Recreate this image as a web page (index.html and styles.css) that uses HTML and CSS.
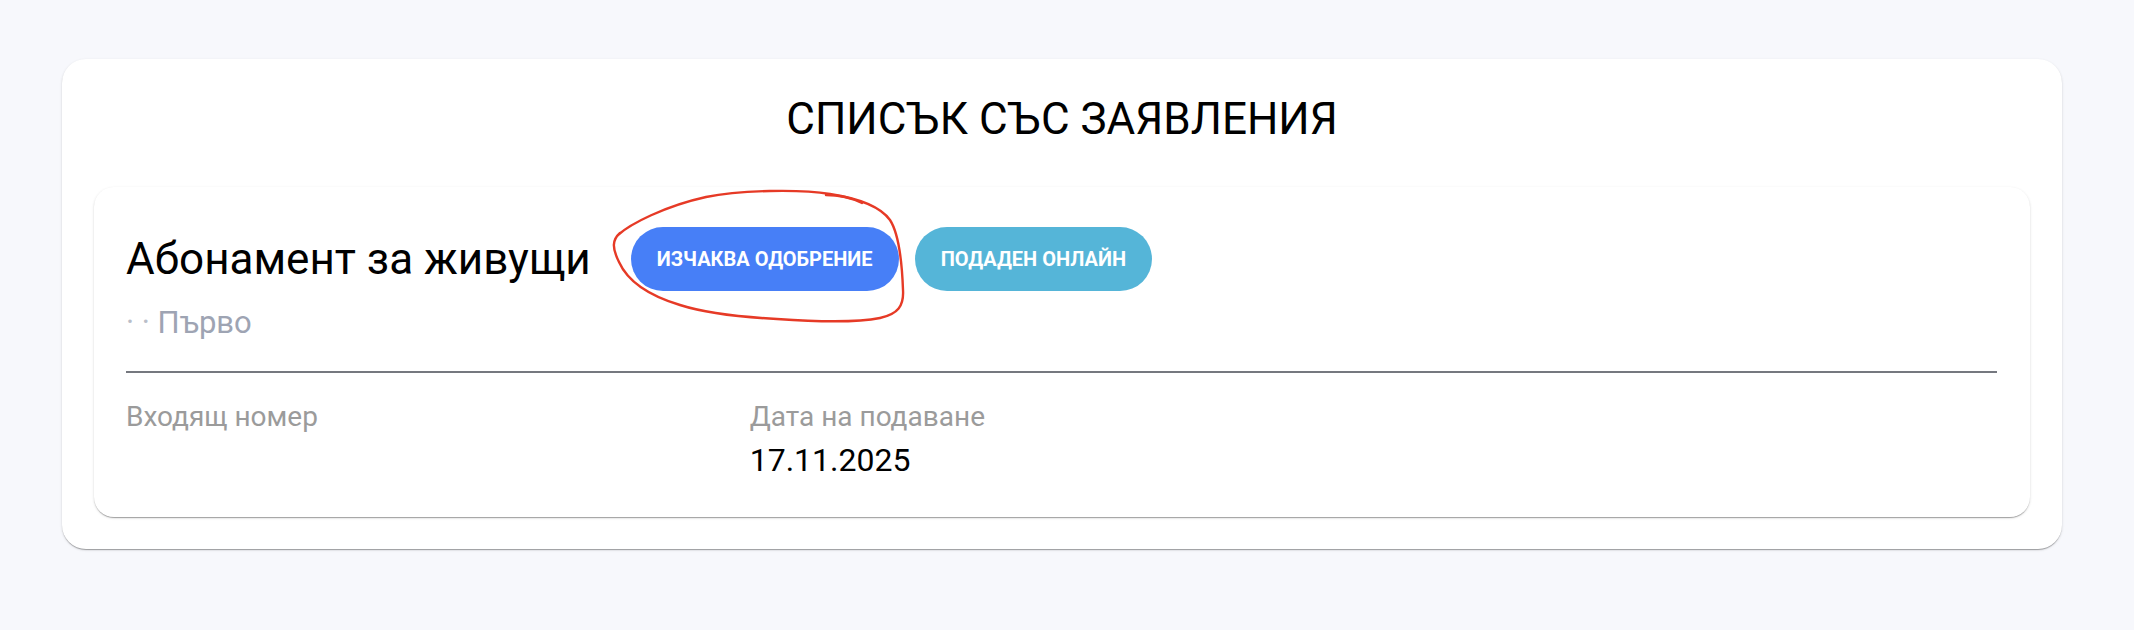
FILE: index.html
```html
<!DOCTYPE html>
<html lang="bg">
<head>
<meta charset="utf-8">
<title>Списък със заявления</title>
<link rel="stylesheet" href="styles.css">
</head>
<body>
<main class="page">
  <section class="panel">
    <h1 class="panel-title">СПИСЪК СЪС ЗАЯВЛЕНИЯ</h1>
    <article class="app-card">
      <div class="app-head">
        <h2 class="app-name">Абонамент за живущи</h2>
        <span class="badge badge-pending">ИЗЧАКВА ОДОБРЕНИЕ</span>
        <span class="badge badge-online">ПОДАДЕН ОНЛАЙН</span>
      </div>
      <div class="app-sub"><span class="dot">·</span> <span class="dot">·</span> Първо</div>
      <hr class="divider">
      <div class="fields">
        <div class="field">
          <div class="field-label">Входящ номер</div>
        </div>
        <div class="field">
          <div class="field-label">Дата на подаване</div>
          <div class="field-value">17.11.2025</div>
        </div>
        <div class="field"></div>
      </div>
    </article>
  </section>
  <svg class="annotation" viewBox="0 0 2134 630" width="2134" height="630" aria-hidden="true">
    <path d="M618 235 C630 224 665 206 706 197 C740 190 800 189 830 194 C856 198 880 206 890 220 C899 234 902 262 903 290 C904 306 898 314 880 318 C860 322 820 322 777 319 C740 317 705 313 680 305 C650 296 628 282 619 262 C612 248 612 240 620 233"/>
    <path d="M826 195 C838 195 850 197 862 203"/>
  </svg>
</main>
</body>
</html>
```

FILE: styles.css
```css
html, body {
  margin: 0;
  padding: 0;
}

body {
  background: #f7f8fc;
  font-family: Roboto, "Noto Sans", "Liberation Sans", sans-serif;
  color: #000;
}

.page {
  position: relative;
  width: 2134px;
  height: 630px;
  box-sizing: border-box;
  padding: 59px 72px 0 62px;
}

.panel {
  background: #fff;
  border-radius: 24px;
  padding: 35px 32px 32px;
  box-shadow: 0 2px 1px -1px rgba(0,0,0,0.2), 0 1px 1px 0 rgba(0,0,0,0.14), 0 1px 3px 0 rgba(0,0,0,0.12);
}

.panel-title {
  margin: 0 0 43px;
  font-size: 44px;
  line-height: 50px;
  font-weight: 400;
  text-align: center;
}

.app-card {
  background: #fff;
  border-radius: 20px;
  padding: 40px 33px 37px 32px;
  box-shadow: 0 2px 1px -1px rgba(0,0,0,0.2), 0 1px 1px 0 rgba(0,0,0,0.14), 0 1px 3px 0 rgba(0,0,0,0.12);
}

.app-head {
  display: flex;
  align-items: center;
  gap: 16px;
  height: 64px;
}

.app-name {
  margin: 0 24px 0 0;
  font-size: 44px;
  line-height: 50px;
  font-weight: 400;
}

.badge {
  display: inline-flex;
  align-items: center;
  height: 64px;
  padding: 0 26px;
  border-radius: 32px;
  color: #fff;
  font-size: 20px;
  font-weight: 700;
  box-sizing: border-box;
}

.badge-pending {
  background: #477ff7;
}

.badge-online {
  background: #55b5d8;
}

.app-sub {
  margin-top: 12px;
  font-size: 31px;
  line-height: 40px;
  color: #9ea4b3;
}

.dot {
  color: #b9bec9;
}

.divider {
  margin: 28px 0 27px;
  border: 0;
  height: 2px;
  background: #75787f;
}

.fields {
  display: grid;
  grid-template-columns: repeat(3, 1fr);
}

.field-label {
  font-size: 28px;
  line-height: 34px;
  color: #9b9b9b;
}

.field-value {
  margin-top: 6px;
  font-size: 32px;
  line-height: 40px;
  color: #000;
}

.annotation {
  position: absolute;
  left: 0;
  top: 0;
  pointer-events: none;
  fill: none;
  stroke: #e63a26;
  stroke-width: 2.4;
  stroke-linecap: round;
  stroke-linejoin: round;
}
```
